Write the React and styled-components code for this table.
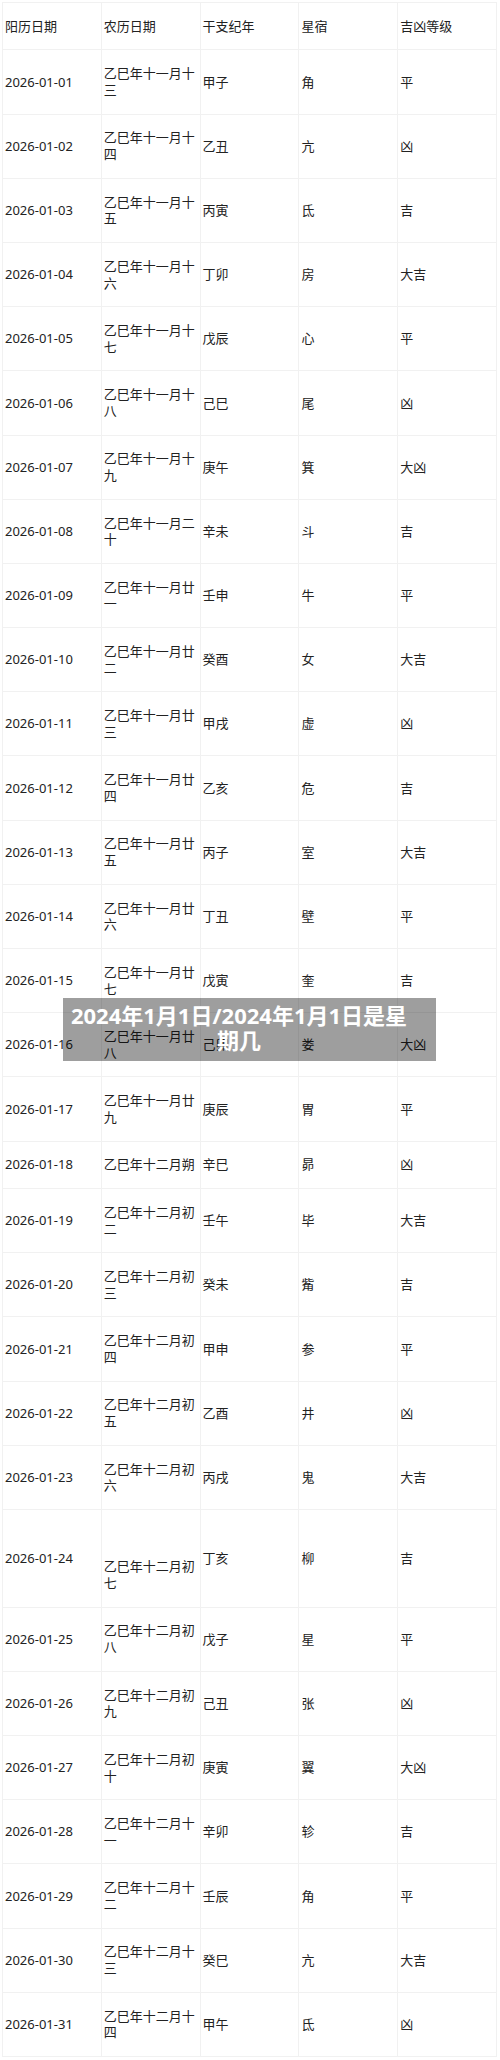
import React from "react";
import styled, { createGlobalStyle } from "styled-components";

const GlobalStyle = createGlobalStyle`
  html, body {
    margin: 0;
    padding: 0;
    background: #fff;
  }
  body {
    font-family: "Noto Sans", "Noto Sans CJK SC", sans-serif;
    color: #222;
  }
`;

const Page = styled.div`
  position: relative;
  width: 500px;
  padding: 2px 3px 2px 2px;
  box-sizing: border-box;
`;

const Table = styled.table`
  width: 495px;
  table-layout: fixed;
  border-collapse: collapse;
  font-size: 13px;
  line-height: 16.8px;
`;

const HeadCell = styled.th`
  font-weight: normal;
  text-align: left;
  padding: 14.8px 2px;
  border: 1px solid #f1f1f1;
  vertical-align: middle;
`;

const Cell = styled.td`
  text-align: left;
  padding: 14.8px 2px;
  border: 1px solid #f1f1f1;
  vertical-align: middle;
  word-break: break-all;
`;

const Banner = styled.div`
  position: absolute;
  left: 63px;
  top: 998px;
  width: 373px;
  box-sizing: border-box;
  padding: 5px 28px 8px 7px;
  background: rgba(0, 0, 0, 0.38);
  color: #fff;
  font-size: 22px;
  font-weight: 700;
  line-height: 25px;
  text-align: center;
`;

const rows = [
  ["2026-01-01", "乙巳年十一月十三", "甲子", "角", "平"],
  ["2026-01-02", "乙巳年十一月十四", "乙丑", "亢", "凶"],
  ["2026-01-03", "乙巳年十一月十五", "丙寅", "氐", "吉"],
  ["2026-01-04", "乙巳年十一月十六", "丁卯", "房", "大吉"],
  ["2026-01-05", "乙巳年十一月十七", "戊辰", "心", "平"],
  ["2026-01-06", "乙巳年十一月十八", "己巳", "尾", "凶"],
  ["2026-01-07", "乙巳年十一月十九", "庚午", "箕", "大凶"],
  ["2026-01-08", "乙巳年十一月二十", "辛未", "斗", "吉"],
  ["2026-01-09", "乙巳年十一月廿一", "壬申", "牛", "平"],
  ["2026-01-10", "乙巳年十一月廿二", "癸酉", "女", "大吉"],
  ["2026-01-11", "乙巳年十一月廿三", "甲戌", "虚", "凶"],
  ["2026-01-12", "乙巳年十一月廿四", "乙亥", "危", "吉"],
  ["2026-01-13", "乙巳年十一月廿五", "丙子", "室", "大吉"],
  ["2026-01-14", "乙巳年十一月廿六", "丁丑", "壁", "平"],
  ["2026-01-15", "乙巳年十一月廿七", "戊寅", "奎", "吉"],
  ["2026-01-16", "乙巳年十一月廿八", "己卯", "娄", "大凶"],
  ["2026-01-17", "乙巳年十一月廿九", "庚辰", "胃", "平"],
  ["2026-01-18", "乙巳年十二月朔", "辛巳", "昴", "凶"],
  ["2026-01-19", "乙巳年十二月初二", "壬午", "毕", "大吉"],
  ["2026-01-20", "乙巳年十二月初三", "癸未", "觜", "吉"],
  ["2026-01-21", "乙巳年十二月初四", "甲申", "参", "平"],
  ["2026-01-22", "乙巳年十二月初五", "乙酉", "井", "凶"],
  ["2026-01-23", "乙巳年十二月初六", "丙戌", "鬼", "大吉"],
  ["2026-01-24", "乙巳年十二月初七", "丁亥", "柳", "吉", 2],
  ["2026-01-25", "乙巳年十二月初八", "戊子", "星", "平"],
  ["2026-01-26", "乙巳年十二月初九", "己丑", "张", "凶"],
  ["2026-01-27", "乙巳年十二月初十", "庚寅", "翼", "大凶"],
  ["2026-01-28", "乙巳年十二月十一", "辛卯", "轸", "吉"],
  ["2026-01-29", "乙巳年十二月十二", "壬辰", "角", "平"],
  ["2026-01-30", "乙巳年十二月十三", "癸巳", "亢", "大吉"],
  ["2026-01-31", "乙巳年十二月十四", "甲午", "氐", "凶"],
];

const heads = ["阳历日期", "农历日期", "干支纪年", "星宿", "吉凶等级"];

const App = () => {
  return (
    <>
      <GlobalStyle />
      <Page>
        <Table>
          <thead>
            <tr>
              {heads.map((h) => (
                <HeadCell key={h}>{h}</HeadCell>
              ))}
            </tr>
          </thead>
          <tbody>
            {rows.map(([date, lunar, ganzhi, star, luck, blank]) => (
              <tr key={date}>
                <Cell>{date}</Cell>
                <Cell>
                  {blank &&
                    Array.from({ length: blank }).map((_, i) => <br key={i} />)}
                  {lunar}
                </Cell>
                <Cell>{ganzhi}</Cell>
                <Cell>{star}</Cell>
                <Cell>{luck}</Cell>
              </tr>
            ))}
          </tbody>
        </Table>
        <Banner>2024年1月1日/2024年1月1日是星期几</Banner>
      </Page>
    </>
  );
};

export default App;
